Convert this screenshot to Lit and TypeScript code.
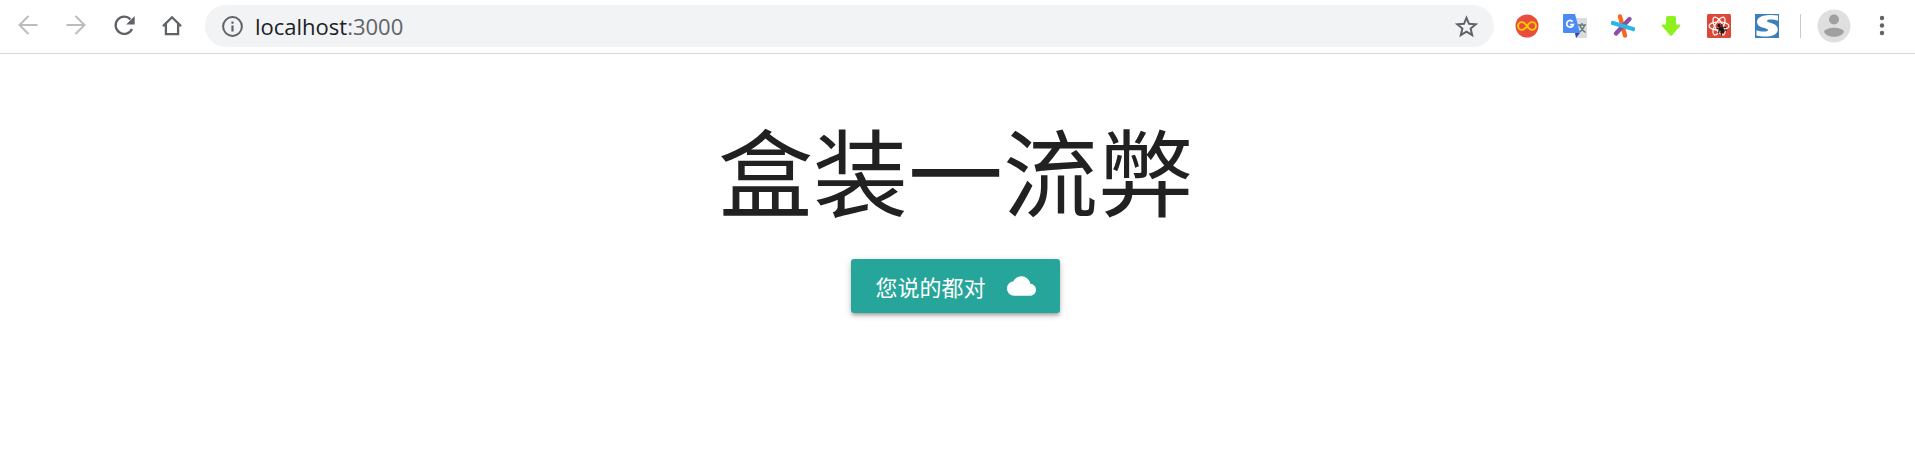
import { LitElement, html, css } from "lit";
import { customElement } from "lit/decorators.js";

@customElement("browser-bar")
export class BrowserBar extends LitElement {
  static styles = css`
    :host {
      display: block;
      font-family: "Open Sans", "Noto Sans", sans-serif;
    }
    .bar {
      display: flex;
      align-items: center;
      gap: 9px;
      padding: 5px 21px 6px 16px;
      background: #fff;
      border-bottom: 1px solid #d5d7da;
    }
    .group {
      display: flex;
      align-items: center;
      gap: 24px;
    }
    .nav {
      padding-right: 12px;
    }
    .tools {
      padding-left: 12px;
    }
    button {
      display: flex;
      padding: 0;
      border: 0;
      background: none;
      color: #5f6368;
      cursor: pointer;
    }
    button:disabled {
      color: #babcbe;
      cursor: default;
    }
    svg {
      display: block;
      width: 24px;
      height: 24px;
    }
    .address {
      flex: 1;
      min-width: 0;
      display: flex;
      align-items: center;
      gap: 10px;
      height: 42px;
      box-sizing: border-box;
      padding: 0 16px;
      border-radius: 21px;
      background: #f1f3f4;
    }
    .url {
      flex: 1;
      color: #606468;
      font-size: 22px;
      line-height: 28px;
      text-decoration: none;
    }
    .host {
      color: #202124;
    }
    .account {
      display: flex;
      align-items: center;
      gap: 16px;
      padding-left: 12px;
    }
    .divider {
      width: 1px;
      height: 24px;
      background: #c8cacc;
    }
    .avatar svg {
      width: 34px;
      height: 34px;
    }
    .menu {
      padding-left: 3px;
    }
  `;

  render() {
    return html`
      <header class="bar">
        <nav class="group nav">
          <button disabled aria-label="Back">
            <svg viewBox="0 0 24 24" fill="none" stroke="currentColor" stroke-width="2">
              <path d="M21.5 11H3.500M12.500 2 3.500 11l9 9" />
            </svg>
          </button>
          <button disabled aria-label="Forward">
            <svg viewBox="0 0 24 24" fill="none" stroke="currentColor" stroke-width="2">
              <path d="M2.500 11h18M11.500 2l9 9-9 9" />
            </svg>
          </button>
          <button aria-label="Reload">
            <svg viewBox="0 0 24 24" fill="none" stroke="currentColor" stroke-width="2.300">
              <path d="M20 15A8.600 8.600 0 1 1 18.500 5.400" />
              <path d="M22.700 2v8.500h-8.500z" fill="currentColor" stroke="none" />
            </svg>
          </button>
          <button aria-label="Home">
            <svg viewBox="0 0 24 24" fill="none" stroke="currentColor" stroke-width="2.300">
              <path d="M3 12.100 12 3.300l9 8.800M5.900 10v10.200h12.200V10" />
            </svg>
          </button>
        </nav>
        <div class="address">
          <button aria-label="Site information">
            <svg viewBox="0 0 24 24" fill="none" stroke="currentColor" stroke-width="2">
              <circle cx="11.500" cy="12.500" r="9.400" />
              <path d="M11.500 11.500v6M11.500 7.500v2.200" stroke-width="2.200" />
            </svg>
          </button>
          <a class="url" href="http://localhost:3000"><span class="host">localhost</span>:3000</a>
          <button aria-label="Bookmark">
            <svg viewBox="0 0 24 24" fill="none" stroke="currentColor" stroke-width="2">
              <path d="m12.500 3.800 2.500 6 6.700.5-5.100 4.300 1.600 6.500-5.700-3.500-5.700 3.500 1.600-6.500-5.100-4.300 6.700-.5z" />
            </svg>
          </button>
        </div>
        <div class="group tools">
          <button aria-label="Infinity">
            <svg viewBox="0 0 24 24">
              <circle cx="12" cy="12" r="11.500" fill="#e94d3d" />
              <path
                d="M12 12c-2-3-3.300-3.900-5-3.900a3.900 3.900 0 0 0 0 7.800c1.700 0 3-.9 5-3.900s3.300-3.900 5-3.900a3.900 3.900 0 0 1 0 7.800c-1.700 0-3-.9-5-3.900z"
                fill="none" stroke="#fc0" stroke-width="1.900"
              />
            </svg>
          </button>
          <button aria-label="Translate">
            <svg viewBox="0 0 24 24">
              <path d="M9 4h14q1 0 1 1v18q0 1-1 1H13z" fill="#dadcdd" />
              <path d="M15 11h8M19 9v2M21.500 11c-.7 3-3 5.800-5.500 7.500M16.700 11c.7 2.500 3 5.500 5.800 7.500" fill="none" stroke="#607d82" stroke-width="1.400" />
              <path d="M12 19h5l-4 5z" fill="#3545a5" />
              <path d="M1 0h11l5 19H1q-1 0-1-1V1q0-1 1-1z" fill="#4c8bf5" />
              <path d="M9.700 7.600a3.400 3.400 0 1 0 .7 3H7.200" fill="none" stroke="#fff" stroke-width="1.700" />
            </svg>
          </button>
          <button aria-label="Asterisk">
            <svg viewBox="0 0 24 24" fill="none" stroke-width="4.400" stroke-linecap="round">
              <path d="M9 2.500 14 21.500" stroke="#f9691d" />
              <path d="M18.500 5 5 19.500" stroke="#8c4fa3" />
              <path d="M2 9 22 15" stroke="#2cb6e9" />
            </svg>
          </button>
          <button aria-label="Download">
            <svg viewBox="0 0 24 24">
              <path d="M9 2h6q2 0 2 2v6.500h3.500q1.600.2.600 1.600l-8 9.200q-1.100 1-2.200 0l-8-9.200q-1-1.400.6-1.600H7V4q0-2 2-2z" fill="#8ef01e" />
            </svg>
          </button>
          <button aria-label="React developer tools">
            <svg viewBox="0 0 24 24" fill="none">
              <rect width="24" height="24" rx="1.500" fill="#dc4838" />
              <g stroke="#fff" stroke-width="1.200">
                <ellipse cx="12" cy="12" rx="10" ry="4" />
                <ellipse cx="12" cy="12" rx="10" ry="4" transform="rotate(60 12 12)" />
                <ellipse cx="12" cy="12" rx="10" ry="4" transform="rotate(120 12 12)" />
              </g>
              <g stroke="#1c1512">
                <circle cx="12" cy="11.500" r="1.200" fill="#1c1512" />
                <ellipse cx="14.800" cy="15.800" rx="1.700" ry="3" fill="#1c1512" transform="rotate(-35 14.800 15.800)" />
                <path d="M9.500 14.500l3 .5-1 4.500M15 10v3l4 .5M17.500 15.500l2.500 1M14 18l.5 3.500" stroke-width="1.200" />
              </g>
            </svg>
          </button>
          <button aria-label="Stylish">
            <svg viewBox="0 0 24 24">
              <rect width="24" height="24" fill="#3d80b7" />
              <path
                d="M23 1.500v5.200c-3-1.300-11-1.900-11 .2 0 2 10.800 1.800 10.800 8.300 0 8-13.500 8.300-21.300 6.300v-5.200c3.500 1.500 11.500 2 11.500-.2C13 13.500 2 14.500 2 8 2 1 14 0 23 1.500z"
                fill="#fff"
              />
            </svg>
          </button>
        </div>
        <div class="account">
          <span class="divider"></span>
          <button class="avatar" aria-label="Profile">
            <svg viewBox="0 0 34 34">
              <circle cx="17" cy="17" r="16.500" fill="#dfdfdf" />
              <circle cx="17" cy="10.500" r="5" fill="#a0a0a0" />
              <path d="M7 22.500c3-5 17-5 20 0-2 7-18 7-20 0z" fill="#a0a0a0" />
            </svg>
          </button>
          <button class="menu" aria-label="Menu">
            <svg viewBox="0 0 24 24" fill="currentColor">
              <circle cx="12" cy="4" r="2.200" />
              <circle cx="12" cy="11.500" r="2.200" />
              <circle cx="12" cy="19" r="2.200" />
            </svg>
          </button>
        </div>
      </header>
    `;
  }
}

@customElement("app-root")
export class AppRoot extends LitElement {
  static styles = css`
    :host {
      display: block;
      background: #fff;
      font-family: "Noto Sans CJK SC", sans-serif;
    }
    main {
      display: flex;
      flex-direction: column;
      align-items: center;
      padding: 62px 28px 62px 24px;
    }
    h1 {
      margin: 0 0 38px;
      color: #212121;
      font-size: 95px;
      font-weight: 400;
      line-height: 105px;
    }
    .action {
      display: flex;
      align-items: center;
      gap: 21px;
      height: 54px;
      padding: 0 24px;
      border: 0;
      border-radius: 3px;
      background: #26a69a;
      box-shadow: 0 3px 3px rgba(0, 0, 0, 0.14), 0 4px 2px -3px rgba(0, 0, 0, 0.12),
        0 2px 7px rgba(0, 0, 0, 0.2);
      color: #fff;
      font-family: inherit;
      font-size: 22px;
      font-weight: 400;
      line-height: 54px;
      cursor: pointer;
    }
    .cloud {
      display: block;
      width: 29px;
      height: 30px;
    }
  `;

  render() {
    return html`
      <browser-bar></browser-bar>
      <main>
        <h1>盒装一流弊</h1>
        <button class="action">
          您说的都对
          <svg class="cloud" viewBox="0 0 24 24" fill="#fff" aria-hidden="true">
            <path d="M19.350 10.040A7.490 7.490 0 0 0 12 4C9.110 4 6.600 5.640 5.350 8.040A5.994 5.994 0 0 0 0 14c0 3.310 2.690 6 6 6h13c2.760 0 5-2.240 5-5 0-2.640-2.050-4.780-4.650-4.960z" />
          </svg>
        </button>
      </main>
    `;
  }
}
